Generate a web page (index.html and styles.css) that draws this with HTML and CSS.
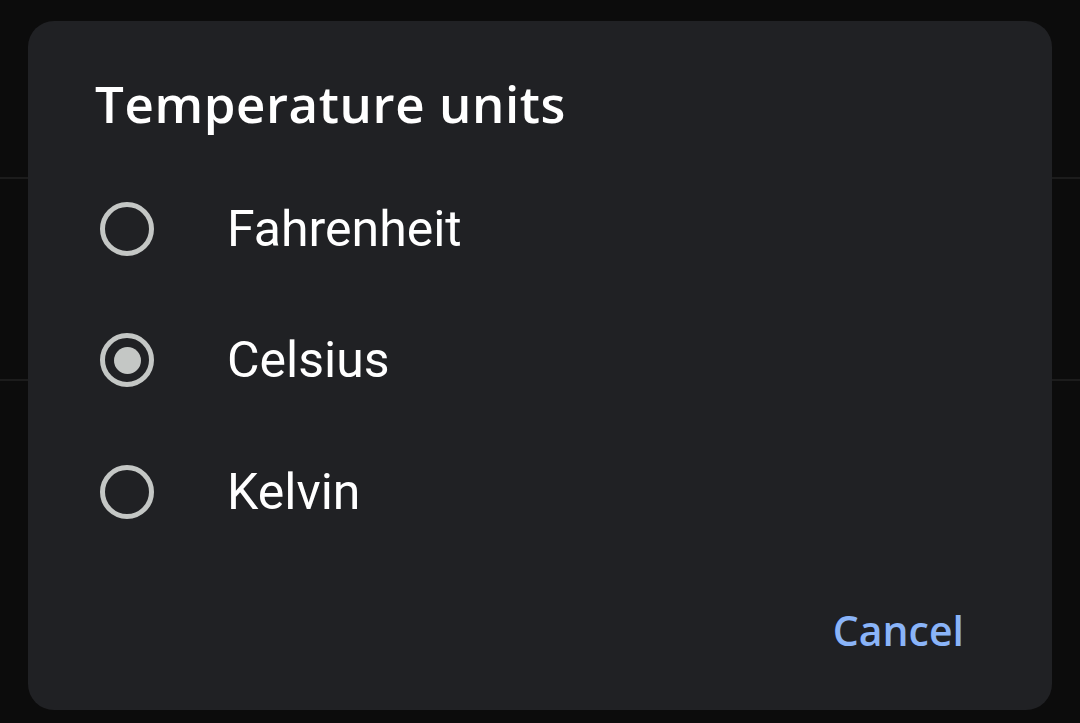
FILE: index.html
```html
<!DOCTYPE html>
<html lang="en">
  <head>
    <meta charset="UTF-8" />
    <meta name="viewport" content="width=device-width, initial-scale=1.0" />
    <title>Temperature units</title>
    <link rel="stylesheet" href="styles.css">
  </head>
  <body>
    <!-- settings list behind the dialog -->
    <div class="settings">
      <div class="settings-row first"></div>
      <div class="settings-row"></div>
    </div>

    <div class="scrim">
      <div class="dialog" role="dialog">
        <h1 class="dialog-title">Temperature units</h1>

        <ul class="options">
          <li class="option">
            <span class="radio"></span>
            <span class="option-label">Fahrenheit</span>
          </li>
          <li class="option">
            <span class="radio checked"></span>
            <span class="option-label">Celsius</span>
          </li>
          <li class="option">
            <span class="radio"></span>
            <span class="option-label">Kelvin</span>
          </li>
        </ul>

        <div class="actions">
          <button class="text-button">Cancel</button>
        </div>
      </div>
    </div>
  </body>
</html>
```

FILE: styles.css
```css
/* Reset */
* {
  margin: 0;
  padding: 0;
  box-sizing: border-box;
}

html,
body {
  height: 100%;
  overflow: hidden;
}

body {
  background-color: #0c0c0c;
  font-family: Roboto, "Liberation Sans", sans-serif;
  position: relative;
}

/* Background list */
.settings-row {
  height: 202px;
  border-bottom: 2px solid #1c1c1c;
}

.settings-row.first {
  height: 179px;
}

/* Dialog overlay */
.scrim {
  position: absolute;
  inset: 0;
}

.dialog {
  position: absolute;
  left: 28px;
  top: 21px;
  width: 1024px;
  height: 689px;
  background-color: #202124;
  border-radius: 26px;
  padding: 50px 88px 0 67px;
  display: flex;
  flex-direction: column;
}

.dialog-title {
  font-family: "Open Sans", sans-serif;
  font-weight: 600;
  font-size: 51px;
  line-height: 64px;
  color: #ffffff;
  letter-spacing: 0.6px;
}

/* Radio options */
.options {
  list-style: none;
  margin-top: 28px;
}

.option {
  display: flex;
  align-items: center;
  height: 131.5px;
}

.radio {
  width: 54px;
  height: 54px;
  margin-left: 5px;
  border: 5px solid #c4c7c5;
  border-radius: 50%;
  display: flex;
  align-items: center;
  justify-content: center;
  flex-shrink: 0;
}

.radio.checked::after {
  content: "";
  width: 27px;
  height: 27px;
  border-radius: 50%;
  background-color: #c4c7c5;
}

.option-label {
  margin-left: 73px;
  font-size: 50px;
  color: #ffffff;
}

/* Actions */
.actions {
  margin-top: auto;
  display: flex;
  justify-content: flex-end;
  padding-bottom: 52px;
}

.text-button {
  background: none;
  border: none;
  font-family: "Open Sans", sans-serif;
  font-weight: 600;
  font-size: 41px;
  color: #8ab4f8;
}
```
